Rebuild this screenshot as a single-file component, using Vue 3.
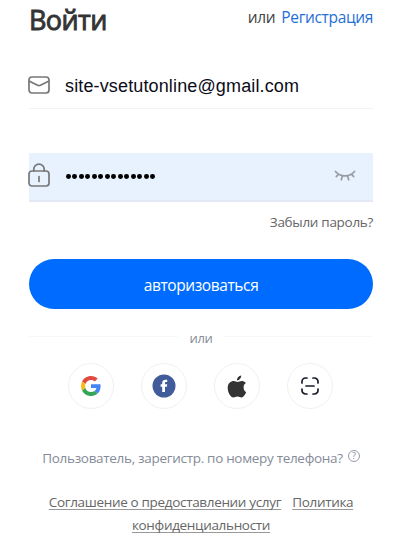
<template>
  <div class="login">
    <header class="login-header">
      <h1>Войти</h1>
      <div class="switch">
        <span>или</span>
        <a class="register">Регистрация</a>
      </div>
    </header>

    <form class="login-form" @submit.prevent>
      <label class="field">
        <svg class="field-icon" width="22" height="24" viewBox="0 0 22 24">
          <rect x="1" y="4" width="20" height="16" rx="3" />
          <path d="M1.5 8.2 9.6 12.3q1.4.7 2.8 0L20.5 8.2" />
        </svg>
        <input v-model="email" class="email" type="text" />
      </label>

      <label class="field filled">
        <svg class="field-icon" width="22" height="24" viewBox="0 0 22 24">
          <rect x="1" y="8" width="20" height="15" rx="3" />
          <path d="M5.800 8V6.200a5.200 5 0 0 1 10.400 0V8M11 13.500v5" />
        </svg>
        <span class="dots">
          <i v-for="n in passwordLength" :key="n"></i>
        </span>
        <svg class="eye" width="22" height="12" viewBox="0 0 22 12">
          <path d="M1.500 1.500C6.200 7.400 15.800 7.400 20.500 1.500M4.300 4.400 2.300 6.600M8.400 6 7.300 9.800M13.600 6l1.100 3.800M17.700 4.400l2 2.200" />
        </svg>
      </label>

      <a class="forgot">Забыли пароль?</a>
      <button class="submit-btn" type="submit"><span>авторизоваться</span></button>
    </form>

    <div class="divider"><span>или</span></div>

    <div class="socials">
      <button class="social">
        <svg width="20" height="20" viewBox="0 0 48 48">
          <path fill="#e04a40" d="M24 9.5c3.54 0 6.71 1.22 9.21 3.6l6.85-6.85C35.9 2.38 30.47 0 24 0 14.62 0 6.51 5.38 2.56 13.22l7.98 6.19C12.43 13.72 17.74 9.5 24 9.5z" />
          <path fill="#4285f4" d="M46.98 24.55c0-1.57-.15-3.09-.38-4.55H24v9.02h12.94c-.58 2.96-2.26 5.48-4.78 7.18l7.73 6c4.51-4.18 7.09-10.36 7.09-17.65z" />
          <path fill="#f6bb1a" d="M10.53 28.59c-.48-1.45-.76-2.99-.76-4.59s.27-3.14.76-4.59l-7.98-6.19C.92 16.46 0 20.12 0 24c0 3.88.92 7.54 2.56 10.78l7.97-6.19z" />
          <path fill="#36a456" d="M24 48c6.48 0 11.93-2.13 15.89-5.81l-7.73-6c-2.15 1.45-4.92 2.3-8.16 2.3-6.26 0-11.57-4.22-13.47-9.91l-7.98 6.19C6.51 42.62 14.62 48 24 48z" />
        </svg>
      </button>
      <button class="social">
        <svg width="24" height="24" viewBox="0 0 24 24">
          <circle cx="12" cy="12" r="11.5" fill="#425b9a" />
          <path fill="#fff" d="M10.200 18v-5.200H8.600v-2.500h1.600V9c0-2.200 1.200-3.300 3.200-3.300.8 0 1.400.1 1.800.1v2.300h-1.100c-.9 0-1.100.4-1.100 1.100v1.100h2.200l-.3 2.500H13V18z" />
        </svg>
      </button>
      <button class="social">
        <svg width="20" height="23" viewBox="0 0 20 23">
          <path fill="#333" d="M16.6 12.2c0-2.2 1.1-3.3 2.3-4.1-1.2-1.8-3-2.2-4.1-2.2-1.8 0-3.3 1-4.3 1-1 0-2.3-1-3.8-1C3.9 5.900.7 8 .7 12.800.7 17.800 3.800 22.500 6.400 22.500c1.400 0 2.100-.9 4.100-.9s2.500.9 4 .9c2 0 3.900-3 4.700-5.400-1.600-.7-2.600-2.400-2.600-4.900z" />
          <path fill="#333" d="M14.200.4c.2 2.200-1.800 4.900-4.300 5C9.700 2.900 11.700.8 14.200.4z" />
        </svg>
      </button>
      <button class="social">
        <svg class="scan" width="20" height="20" viewBox="0 0 20 20">
          <path d="M2 7V5.500A3.500 3.500 0 0 1 5.500 2H7M13 2h1.500A3.500 3.500 0 0 1 18 5.500V7M18 13v1.500a3.500 3.500 0 0 1-3.500 3.500H13M7 18H5.500A3.500 3.500 0 0 1 2 14.500V13M6 10h8" />
        </svg>
      </button>
    </div>

    <div class="phone">
      <span class="phone-text">Пользователь, зарегистр. по номеру телефона?</span>
      <span class="help">?</span>
    </div>

    <footer class="legal">
      <div class="legal-row">
        <a class="terms">Соглашение о предоставлении услуг</a>
        <a class="policy">Политика</a>
      </div>
      <div class="legal-row"><a class="privacy">конфиденциальности</a></div>
    </footer>
  </div>
</template>

<script setup>
import { ref } from 'vue'

const email = ref('site-vsetutonline@gmail.com')
const passwordLength = ref(14)
</script>

<style>
body {
  margin: 0;
  background: #fff;
  overflow: hidden;
}
</style>

<style scoped>
.login {
  box-sizing: border-box;
  width: 403px;
  height: 543px;
  padding: 0 30px 0 29px;
  overflow: hidden;
  font-family: 'Open Sans', 'Noto Sans', sans-serif;
  font-size: 14px;
  color: #666;
}

.login-header {
  display: flex;
  justify-content: space-between;
  height: 61px;
}

h1 {
  margin: 0;
  font-size: 27px;
  line-height: 39px;
  font-weight: 400;
  color: #333;
  letter-spacing: -0.6px;
  -webkit-text-stroke: 0.9px #333;
}

.switch {
  display: flex;
  gap: 6px;
  font-size: 15.5px;
  line-height: 35px;
  color: #444;
  letter-spacing: -0.35px;
}

.register {
  color: #1f6fd6;
}

.login-form {
  display: flex;
  flex-direction: column;
}

.field {
  box-sizing: border-box;
  display: flex;
  align-items: center;
  height: 48px;
  border-bottom: 1px solid #f3f3f5;
}

.filled {
  height: 49px;
  margin-top: 44px;
  background: #e8f1fe;
  border-bottom: 2px solid #e2e9f4;
}

.field-icon {
  flex: none;
  margin: 1px 15px 0 -1px;
  fill: none;
  stroke: #777;
  stroke-width: 1.7;
  stroke-linecap: round;
}

.filled .field-icon {
  margin-top: -3px;
}

.email {
  flex: 1;
  min-width: 0;
  padding: 4px 0 0;
  border: none;
  outline: none;
  background: none;
  font-family: 'Liberation Sans', Arial, sans-serif;
  font-size: 18px;
  letter-spacing: 0.14px;
  color: #0c0c18;
}

.dots {
  display: flex;
  flex: 1;
  gap: 1.7px;
  padding-left: 1px;
}

.dots i {
  width: 4.8px;
  height: 4.8px;
  border-radius: 50%;
  background: #000;
}

.eye {
  margin: -1px 17px 0 0;
  fill: none;
  stroke: #999ca3;
  stroke-width: 1.7;
  stroke-linecap: round;
}

.forgot {
  align-self: flex-end;
  margin-top: 9px;
  font-size: 13.5px;
  line-height: 22px;
  letter-spacing: -0.3px;
}

.submit-btn {
  height: 50px;
  margin-top: 26px;
  padding: 2px 0 0;
  border: none;
  border-radius: 25px;
  background: #006cff;
  color: #fff;
  font-family: inherit;
  font-size: 15.5px;
  letter-spacing: -0.4px;
}

.divider {
  display: flex;
  align-items: center;
  gap: 11px;
  height: 20px;
  margin-top: 17px;
  font-size: 13px;
  color: #858b98;
}

.divider span {
  padding-top: 3px;
  letter-spacing: -0.3px;
}

.divider::before,
.divider::after {
  content: '';
  flex: 1;
  height: 1px;
  background: #f7f7f9;
}

.socials {
  display: flex;
  justify-content: center;
  gap: 27.3px;
  margin: 17px 1px 0 0;
}

.social {
  display: flex;
  align-items: center;
  justify-content: center;
  box-sizing: border-box;
  width: 46px;
  height: 46px;
  padding: 0;
  border: 1px solid #f0f0f4;
  border-radius: 50%;
  background: #fff;
}

.scan {
  fill: none;
  stroke: #171a29;
  stroke-width: 1.7;
  stroke-linecap: round;
}

.phone {
  display: flex;
  justify-content: center;
  gap: 5px;
  margin-top: 38px;
  font-size: 13.5px;
  line-height: 22px;
  letter-spacing: -0.31px;
  color: #858b98;
  white-space: nowrap;
}

.help {
  box-sizing: border-box;
  width: 12px;
  height: 12px;
  margin-top: 3px;
  border: 1px solid #979ca8;
  border-radius: 50%;
  font-size: 9px;
  line-height: 10px;
  text-align: center;
}

.legal {
  margin-top: 22px;
  font-size: 13.5px;
  line-height: 23px;
  letter-spacing: -0.33px;
  white-space: nowrap;
}

.legal-row {
  display: flex;
  justify-content: center;
  gap: 11px;
}

.legal a {
  text-decoration: underline;
  text-decoration-color: #999;
  text-underline-offset: 2px;
  text-decoration-skip-ink: none;
}
</style>
